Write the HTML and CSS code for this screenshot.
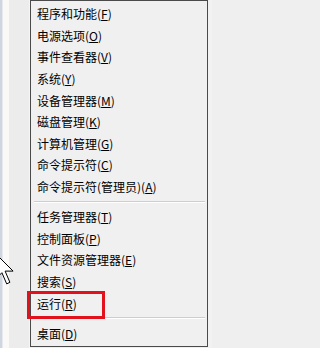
FILE: index.html
```html
<!DOCTYPE html>
<html lang="zh-CN">
<head>
<meta charset="utf-8">
<title>Win+X 菜单</title>
<link rel="stylesheet" href="styles.css">
</head>
<body>
<div class="screen">
  <div class="desk"></div>
  <div class="menu">
    <ul class="group">
      <li class="item">程序和功能(<u>F</u>)</li>
      <li class="item">电源选项(<u>O</u>)</li>
      <li class="item">事件查看器(<u>V</u>)</li>
      <li class="item">系统(<u>Y</u>)</li>
      <li class="item">设备管理器(<u>M</u>)</li>
      <li class="item">磁盘管理(<u>K</u>)</li>
      <li class="item">计算机管理(<u>G</u>)</li>
      <li class="item">命令提示符(<u>C</u>)</li>
      <li class="item">命令提示符(管理员)(<u>A</u>)</li>
    </ul>
    <div class="sep"></div>
    <ul class="group">
      <li class="item">任务管理器(<u>T</u>)</li>
      <li class="item">控制面板(<u>P</u>)</li>
      <li class="item">文件资源管理器(<u>E</u>)</li>
      <li class="item">搜索(<u>S</u>)</li>
      <li class="item">运行(<u>R</u>)</li>
    </ul>
    <div class="sep"></div>
    <ul class="group">
      <li class="item">桌面(<u>D</u>)</li>
    </ul>
  </div>
  <div class="edge"></div>
  <div class="mark"></div>
  <svg class="cursor" viewBox="0 0 20 32" width="20" height="32">
    <path d="M0.5 0.5 L0.5 26.1 L6.9 19.7 L11.7 30.9 L14.9 29.3 L10.1 18.1 L18.1 18.1 Z" fill="#fff" stroke="#000" stroke-width="1" stroke-linejoin="miter"/>
  </svg>
</div>
</body>
</html>
```

FILE: styles.css
```css
html, body {
  margin: 0;
  padding: 0;
}

body {
  width: 212px;
  height: 348px;
  overflow: hidden;
  background: #efefef;
}

.screen {
  position: relative;
  display: flex;
  width: 212px;
  height: 348px;
  overflow: hidden;
  font-family: "Noto Sans CJK SC", "Noto Sans", sans-serif;
  font-size: 12px;
  color: #000;
}

.desk {
  flex: none;
  width: 30px;
  background: linear-gradient(to right,
    #cfd6df 0, #cfd6df 2px,
    #e6e9ee 2px, #e6e9ee 3px,
    #fbf8f8 3px, #fbf8f8 9px,
    #ececec 9px, #ececec 29px,
    #f6f6f6 29px, #f6f6f6 30px);
}

.menu {
  flex: none;
  width: 178px;
  height: 347px;
  box-sizing: border-box;
  border: 1px solid #4a4a4a;
  background: #f0f0f0;
  padding-top: 2.2px;
}

.edge {
  flex: 1;
  background: #f2f2f2;
}

.group {
  list-style: none;
  margin: 0;
  padding: 0;
}

.item {
  height: 21.6px;
  line-height: 21.6px;
  padding-left: 6px;
  white-space: nowrap;
}

.item u {
  text-decoration: underline;
  text-underline-offset: 1px;
}

.sep {
  height: 8.6px;
  margin: 0 2px 0 3px;
  background:
    linear-gradient(#cdcdcd, #cdcdcd) 0 3px / 100% 1px no-repeat,
    linear-gradient(#ffffff, #ffffff) 0 4px / 100% 1px no-repeat;
}

.mark {
  position: absolute;
  left: 27px;
  top: 291px;
  width: 78px;
  height: 28px;
  box-sizing: border-box;
  border: 3px solid #e3111b;
}

.cursor {
  position: absolute;
  left: -5px;
  top: 253px;
}
```
